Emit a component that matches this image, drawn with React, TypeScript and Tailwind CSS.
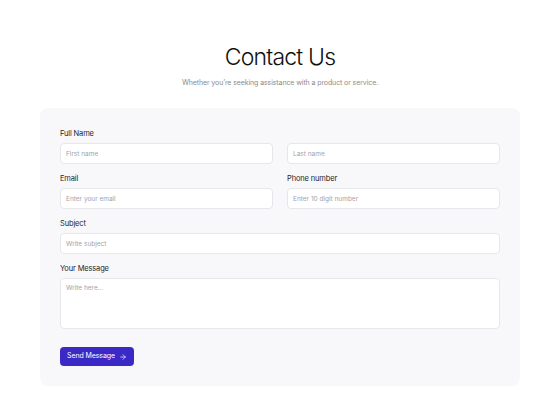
import { ArrowRight } from "lucide-react"

const field =
  "block w-full h-[21px] rounded-[4px] border border-[#e5e7eb] bg-white px-[5px] text-[6.5px] text-gray-700 placeholder:text-[#a1a1aa] outline-none"

function Label({ children }: { children: React.ReactNode }) {
  return <label className="block h-[12px] leading-[12px] text-[7.5px] text-[#1f2328] tracking-[-0.15px] mb-[3px]">{children}</label>
}

export default function App() {
  return (
    <div className="min-h-[400px] w-full bg-white font-['Inter',sans-serif]">
      <div className="pt-[41px] text-center">
        <h1 className="text-[23px] leading-[32px] font-light text-[#111] tracking-[-0.8px]">Contact Us</h1>
        <p className="mt-[4px] text-[7px] leading-[12px] text-[#8b8b8b] tracking-[-0.1px]">
          Whether you’re seeking assistance with a product or service.
        </p>
      </div>

      <div className="mx-[40px] mt-[19px] rounded-[8px] bg-[#f8f8fa] px-[20px] pt-[20px] pb-[20px]">
        <div className="grid grid-cols-2 gap-x-[14px] gap-y-[9px]">
          <div>
            <Label>Full Name</Label>
            <input className={field} placeholder="First name" />
          </div>
          <div>
            <div className="h-[12px] mb-[3px]" />
            <input className={field} placeholder="Last name" />
          </div>
          <div>
            <Label>Email</Label>
            <input className={field} placeholder="Enter your email" />
          </div>
          <div>
            <Label>Phone number</Label>
            <input className={field} placeholder="Enter 10 digit number" />
          </div>
          <div className="col-span-2">
            <Label>Subject</Label>
            <input className={field} placeholder="Write subject" />
          </div>
          <div className="col-span-2">
            <Label>Your Message</Label>
            <textarea
              className="block w-full h-[51px] resize-none rounded-[4px] border border-[#e5e7eb] bg-white px-[5px] py-[5px] text-[6.5px] text-gray-700 placeholder:text-[#a1a1aa] outline-none"
              placeholder="Write here..."
            />
          </div>
        </div>

        <button className="mt-[18px] flex h-[19px] w-[74px] items-center justify-center gap-[4px] rounded-[4px] bg-[#3a28c7] text-[7px] text-white tracking-[-0.1px]">
          Send Message
          <ArrowRight size={8} strokeWidth={2} />
        </button>
      </div>
    </div>
  )
}
